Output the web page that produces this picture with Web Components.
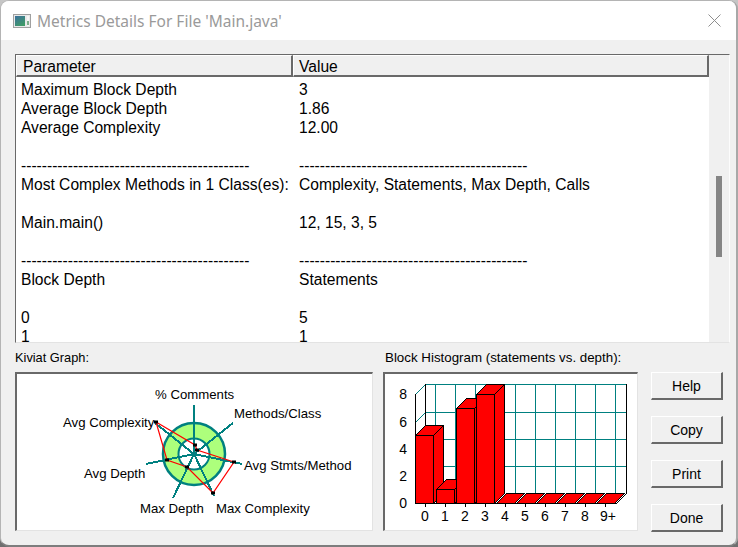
<!DOCTYPE html>
<html>
<head>
<meta charset="UTF-8"/>
<style>
    html, body { margin: 0; padding: 0; background: linear-gradient(#c6c6c6, #6e6e6e); }
    body { width: 738px; height: 547px; overflow: hidden; font-family: "Liberation Sans", Arial, sans-serif; }
</style>
</head>
<body>

<metrics-window>
    <title-bar slot="title">Metrics Details For File 'Main.java'</title-bar>

    <metrics-table slot="table">
        <metric-row>Maximum Block Depth<span slot="value">3</span></metric-row>
        <metric-row>Average Block Depth<span slot="value">1.86</span></metric-row>
        <metric-row>Average Complexity<span slot="value">12.00</span></metric-row>
        <metric-row></metric-row>
        <metric-row>--------------------------------------------<span slot="value">--------------------------------------------</span></metric-row>
        <metric-row>Most Complex Methods in 1 Class(es):<span slot="value">Complexity, Statements, Max Depth, Calls</span></metric-row>
        <metric-row></metric-row>
        <metric-row>Main.main()<span slot="value">12, 15, 3, 5</span></metric-row>
        <metric-row></metric-row>
        <metric-row>--------------------------------------------<span slot="value">--------------------------------------------</span></metric-row>
        <metric-row>Block Depth<span slot="value">Statements</span></metric-row>
        <metric-row></metric-row>
        <metric-row>0<span slot="value">5</span></metric-row>
        <metric-row>1<span slot="value">1</span></metric-row>
    </metrics-table>

    <graph-panel slot="kiviat" label="Kiviat Graph:" style="width:358px;font-size:12.8px;--label-pad:0"><kiviat-graph></kiviat-graph></graph-panel>
    <graph-panel slot="histogram" label="Block Histogram (statements vs. depth):" style="width:255px;--label-pad:2px"><block-histogram></block-histogram></graph-panel>

    <dialog-button slot="buttons">Help</dialog-button>
    <dialog-button slot="buttons">Copy</dialog-button>
    <dialog-button slot="buttons">Print</dialog-button>
    <dialog-button slot="buttons">Done</dialog-button>
</metrics-window>

<script>
    // Small helper, every element below just sets its own shadow markup
    function shadow(el, html) {
        el.attachShadow({ mode: 'open' }).innerHTML = html;
    }

    customElements.define('metrics-window', class extends HTMLElement {
        constructor() {
            super();
            shadow(this, `
                <style>
                    :host { display: flex; flex-direction: column; box-sizing: border-box; width: 738px; height: 547px;
                            background: #f0f0f0; border: 1px solid #b4b4b4; border-right: 2px solid #a8a8a8;
                            border-bottom: 2px solid #7d7d7d; border-radius: 9px; overflow: hidden; }
                    .content { flex: 1; display: flex; flex-direction: column; padding: 14px 8px 0 14px; min-height: 0; }
                    .bottom { display: flex; margin-top: 6px; }
                    .panels { display: flex; gap: 10px; }
                    .buttons { display: flex; flex-direction: column; gap: 16px; margin: 23px 0 0 13px; }
                </style>
                <slot name="title"></slot>
                <div class="content">
                    <slot name="table"></slot>
                    <div class="bottom">
                        <div class="panels"><slot name="kiviat"></slot><slot name="histogram"></slot></div>
                        <div class="buttons"><slot name="buttons"></slot></div>
                    </div>
                </div>`);
        }
    });

    customElements.define('title-bar', class extends HTMLElement {
        constructor() {
            super();
            shadow(this, `
                <style>
                    :host { display: flex; align-items: center; height: 39px; flex: none; background: #fff; padding: 0 15px 0 12px; }
                    .text { flex: 1; margin-left: 6px; color: #9a9a9a; font: 15.5px "Noto Sans", sans-serif; white-space: nowrap; }
                    svg { display: block; }
                </style>
                <svg width="18" height="14" viewBox="0 0 18 14">
                    <defs><linearGradient id="g" x1="0" y1="0" x2="0.6" y2="1">
                        <stop offset="0" stop-color="#3b6f9e"/><stop offset="1" stop-color="#3f9a68"/>
                    </linearGradient></defs>
                    <rect x="0.5" y="0.5" width="17" height="13" fill="#e9e9e9" stroke="#a0a0a0"/>
                    <rect x="2" y="2" width="10" height="10" fill="url(#g)"/>
                    <rect x="14" y="2" width="2" height="10" fill="#f6f6f6"/>
                    <rect x="14" y="7" width="2" height="4" fill="#7fb08c"/>
                </svg>
                <span class="text"><slot></slot></span>
                <svg width="13" height="13" viewBox="0 0 13 13"><path d="M0.5 0.5 L12.5 12.5 M12.5 0.5 L0.5 12.5" stroke="#8e8e8e" fill="none"/></svg>`);
        }
    });

    customElements.define('metrics-table', class extends HTMLElement {
        constructor() {
            super();
            shadow(this, `
                <style>
                    :host { display: flex; box-sizing: border-box; width: 715px; height: 289px; flex: none; background: #fff;
                            border-top: 1px solid #696969; border-left: 1px solid #696969;
                            border-right: 1px solid #fcfcfc; border-bottom: 1px solid #e3e3e3; }
                    .main { flex: 1; display: flex; flex-direction: column; min-width: 0; }
                    .head { display: grid; grid-template-columns: 277px 1fr; height: 22px; flex: none; font-size: 15.6px; }
                    .cell { box-sizing: border-box; background: #f0f0f0; line-height: 17px; padding-top: 2px; white-space: nowrap;
                            border-top: 1px solid #fff; border-left: 1px solid #fff;
                            border-right: 2px solid #696969; border-bottom: 2px solid #696969; }
                    .cell.p { padding-left: 6px; }
                    .cell.v { padding-left: 5px; }
                    .rows { padding-top: 3px; height: 262px; }
                    .bar { width: 20px; flex: none; background: #f0f0f0; position: relative; }
                    .thumb { position: absolute; left: 7px; top: 121px; width: 6px; height: 81px; background: #858585; }
                </style>
                <div class="main">
                    <div class="head"><div class="cell p">Parameter</div><div class="cell v">Value</div></div>
                    <div class="rows"><slot></slot></div>
                </div>
                <div class="bar"><div class="thumb"></div></div>`);
        }
    });

    customElements.define('metric-row', class extends HTMLElement {
        constructor() {
            super();
            shadow(this, `
                <style>
                    :host { display: grid; grid-template-columns: 278px 1fr; height: 19px; padding-left: 5px;
                            font-size: 15.6px; line-height: 19px; white-space: nowrap; color: #000; }
                </style>
                <div><slot></slot></div>
                <div><slot name="value"></slot></div>`);
        }
    });

    customElements.define('graph-panel', class extends HTMLElement {
        constructor() {
            super();
            shadow(this, `
                <style>
                    :host { display: flex; flex-direction: column; font-size: 13.33px; color: #000; }
                    .label { height: 23px; line-height: 17px; white-space: nowrap; padding-left: var(--label-pad, 1px); }
                    .box { box-sizing: border-box; height: 159px; background: #fff; border-top: 2px solid #696969; border-left: 2px solid #696969;
                           border-right: 1px solid #e3e3e3; border-bottom: 1px solid #e3e3e3; }
                </style>
                <div class="label">${this.getAttribute('label')}</div>
                <div class="box"><slot></slot></div>`);
        }
    });

    // Drawn in page coordinates minus the box origin (17,375)
    customElements.define('kiviat-graph', class extends HTMLElement {
        constructor() {
            super();
            const c = [177, 80];
            const ends = [[177, 31], [216, 49], [225, 90], [197, 122], [156, 124], [129, 90], [138, 49]];
            const pts = [[139, 48], [178, 71], [180, 76], [217, 88], [196, 119], [170, 93], [150, 86]];
            const axes = ends.map(e => `<line x1="${c[0]}" y1="${c[1]}" x2="${e[0]}" y2="${e[1]}"/>`).join('');
            const marks = pts.map(p => `<rect x="${p[0] - 2}" y="${p[1] - 1.5}" width="4" height="3" fill="#000"/>`).join('');
            shadow(this, `
                <style>
                    :host { display: block; }
                    svg { display: block; }
                    text { font: 13.2px "Liberation Sans", sans-serif; fill: #000; }
                </style>
                <svg width="355" height="156" viewBox="0 0 355 156">
                    <circle cx="177" cy="80" r="31" fill="#adff7c" stroke="#008080" stroke-width="2.5"/>
                    <circle cx="177" cy="80" r="15.5" fill="#fff" stroke="#008080" stroke-width="2"/>
                    <g stroke="#008080" stroke-width="2" shape-rendering="crispEdges">${axes}</g>
                    <polygon points="${pts.map(p => p.join(',')).join(' ')}" fill="none" stroke="#ff0000" stroke-width="1.2"/>
                    ${marks}
                    <text x="138" y="25">% Comments</text>
                    <text x="217" y="44">Methods/Class</text>
                    <text x="227" y="96">Avg Stmts/Method</text>
                    <text x="199" y="139">Max Complexity</text>
                    <text x="123" y="139">Max Depth</text>
                    <text x="67" y="104">Avg Depth</text>
                    <text x="46" y="53">Avg Complexity</text>
                </svg>`);
        }
    });

    // 3D bar chart, origin (385,375). Half pixel coordinates so 1px lines stay sharp
    customElements.define('block-histogram', class extends HTMLElement {
        constructor() {
            super();
            const left = 30.5, base = 129.5, d = 10;
            const tops = [61.5, 115.5, 34.5, 20.5, 129.5, 129.5, 129.5, 129.5, 129.5, 129.5];
            const labels = ['0', '1', '2', '3', '4', '5', '6', '7', '8', '9+'];
            const labelX = [40, 60, 80, 100, 120, 140, 160, 180, 200, 223];
            let grid = '', bars = '', ticks = '', text = '';
            for (let i = 0; i < 10; i++) {
                const x = 50.5 + 20 * i;
                grid += `<line x1="${x}" y1="10.5" x2="${x}" y2="119.5"/>`;
            }
            [10.5, 38.5, 65.5, 92.5].forEach(y => {
                grid += `<line x1="${left + d}" y1="${y}" x2="241.5" y2="${y}"/>`;
            });
            grid += `<line x1="${left}" y1="48.5" x2="${left + d}" y2="38.5"/><line x1="${left}" y1="20.5" x2="${left + d}" y2="10.5"/>`;
            tops.forEach((top, i) => {
                const x = i ? 31.5 + 20 * i : 30.5, w = 18;
                if (top < base) {
                    bars += `<g fill="#ff0000" stroke="#000">
                        <polygon points="${x + w},${top} ${x + w + d},${top - d} ${x + w + d},${base - d} ${x + w},${base}"/>
                        <polygon points="${x},${top} ${x + d},${top - d} ${x + w + d},${top - d} ${x + w},${top}"/>
                        <rect x="${x}" y="${top}" width="${w}" height="${base - top}"/></g>`;
                } else {
                    bars += `<polygon points="${x},${base} ${x + d},${base - d} ${x + w + d},${base - d} ${x + w},${base}" fill="#ff0000" stroke="#000"/>`;
                }
                ticks += `<line x1="${40.5 + 20 * i}" y1="${base}" x2="${40.5 + 20 * i}" y2="${base + 3}"/>`;
                text += `<text x="${labelX[i]}" y="147" text-anchor="middle">${labels[i]}</text>`;
            });
            [[0, 129], [2, 102], [4, 75], [6, 48], [8, 20]].forEach(t => {
                text += `<text x="22" y="${t[1] + 5}" text-anchor="end">${t[0]}</text>`;
            });
            shadow(this, `
                <style>
                    :host { display: block; }
                    svg { display: block; }
                    text { font: 14px "Liberation Sans", sans-serif; fill: #000; }
                </style>
                <svg width="252" height="156" viewBox="0 0 252 156">
                    <g stroke="#008080" shape-rendering="crispEdges">${grid}</g>
                    <g stroke="#000" shape-rendering="crispEdges">
                        <line x1="40.5" y1="10" x2="40.5" y2="119.5"/>
                        <line x1="241.5" y1="10" x2="241.5" y2="119.5"/>
                        <line x1="30.5" y1="20" x2="30.5" y2="${base}"/>
                    </g>
                    <g shape-rendering="crispEdges">${bars}</g>
                    <g stroke="#000" shape-rendering="crispEdges">
                        <line x1="30" y1="${base}" x2="231.5" y2="${base}"/>
                        <line x1="231.5" y1="${base}" x2="241.5" y2="119.5"/>
                        ${ticks}
                    </g>
                    ${text}
                </svg>`);
        }
    });

    customElements.define('dialog-button', class extends HTMLElement {
        constructor() {
            super();
            shadow(this, `
                <style>
                    :host { display: flex; align-items: center; justify-content: center; box-sizing: border-box; width: 72px; height: 28px;
                            background: #f0f0f0; font-size: 14px; color: #000;
                            border-top: 1px solid #fff; border-left: 1px solid #fff;
                            border-right: 2px solid #696969; border-bottom: 2px solid #696969; }
                </style>
                <slot></slot>`);
        }
    });
</script>
</body>
</html>
